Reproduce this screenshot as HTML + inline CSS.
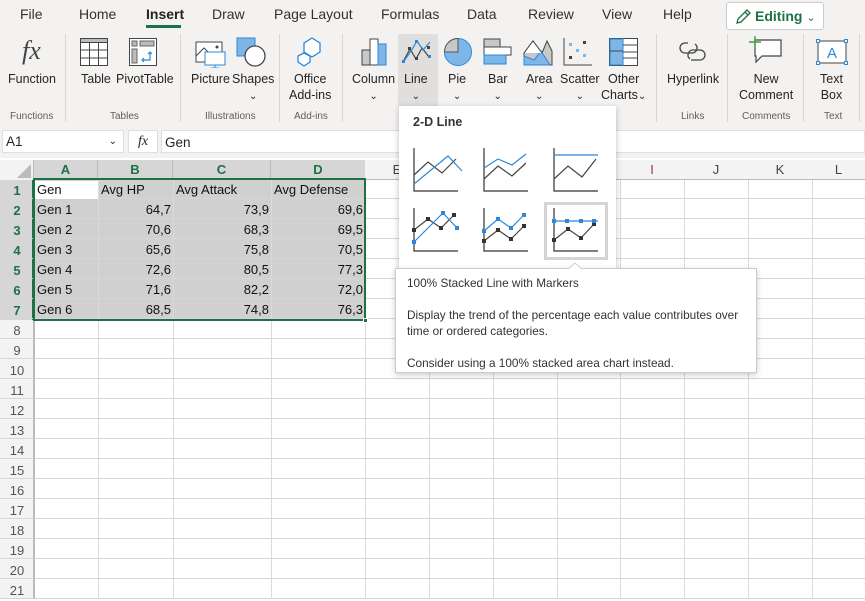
<!DOCTYPE html>
<html><head><meta charset="utf-8"><style>
*{box-sizing:border-box;margin:0;padding:0}
body{width:865px;height:599px;overflow:hidden;background:#fff;font-family:"Liberation Sans",sans-serif;color:#252423;position:relative;font-size:13px}
.a{position:absolute}
.tab{position:absolute;top:6px;font-size:14px;color:#323130}
.btn{position:absolute;font-size:12.5px;color:#252423;text-align:center;line-height:16px}
.gl{position:absolute;top:111px;font-size:10px;color:#605e5c}
.sep{position:absolute;top:34px;width:1px;height:88px;background:#d6d6d6}
.ch{position:absolute;top:160px;height:20px;font-size:13px;text-align:center;line-height:20px;color:#444}
.rh{position:absolute;left:0;width:34px;height:20px;text-align:center;font-size:13px;line-height:21px;color:#555}
.vl{position:absolute;top:180px;width:1px;height:419px;background:#dadada}
.c{position:absolute;height:19px;font-size:13px;line-height:20px;color:#111}
.r{text-align:right}
</style></head><body>
<div class="a" style="left:0;top:0;width:865px;height:126px;background:#f3f2f1"></div>
<div class="tab" style="left:20px">File</div>
<div class="tab" style="left:79px">Home</div>
<div class="tab" style="left:146px;font-weight:bold;color:#252423">Insert</div>
<div class="a" style="left:146px;top:25px;width:35px;height:3px;background:#1e7145"></div>
<div class="tab" style="left:212px">Draw</div>
<div class="tab" style="left:274px">Page Layout</div>
<div class="tab" style="left:381px">Formulas</div>
<div class="tab" style="left:467px">Data</div>
<div class="tab" style="left:528px">Review</div>
<div class="tab" style="left:602px">View</div>
<div class="tab" style="left:663px">Help</div>
<div class="a" style="left:726px;top:2px;width:98px;height:28px;border:1px solid #ccc;border-radius:3px;background:#fff;color:#1e7145;font-size:14px;font-weight:bold;line-height:27px;padding-left:28px">Editing <span style="font-weight:normal;font-size:11px">&#8964;</span></div>
<svg class="a" style="left:734px;top:8px" width="18" height="18"><path d="M3 15l1-4 9-9 3 3-9 9z M11 4l3 3" fill="none" stroke="#1e7145" stroke-width="1.3"/></svg>

<div class="a" style="left:22px;top:36px;font-family:'Liberation Serif',serif;font-style:italic;font-size:26px;color:#444">fx</div>
<div class="btn" style="left:8px;top:71px">Function</div>
<div class="gl" style="left:10px">Functions</div>
<div class="sep" style="left:65px"></div>
<svg class="a" style="left:80px;top:38px" width="28" height="28"><rect x="0.5" y="0.5" width="27" height="27" fill="#fff" stroke="#444"/><rect x="0.5" y="0.5" width="27" height="4" fill="#bbb" stroke="#444"/><path d="M9.5 5v23M18.5 5v23M1 12h27M1 20h27" stroke="#444"/></svg>
<div class="btn" style="left:81px;top:71px">Table</div>
<svg class="a" style="left:129px;top:38px" width="28" height="28"><rect x="0.5" y="0.5" width="27" height="27" fill="#fff" stroke="#444"/><rect x="3" y="3" width="5" height="5" fill="#bbb" stroke="#666"/><rect x="11" y="3" width="14" height="5" fill="#bbb" stroke="#666"/><rect x="3" y="11" width="5" height="14" fill="#bbb" stroke="#666"/><path d="M13 22h8v-8M19 16l2-2 2 2M15 20l-2 2 2 2" fill="none" stroke="#2b88d8" stroke-width="1.2"/></svg>
<div class="btn" style="left:116px;top:71px">PivotTable</div>
<div class="gl" style="left:110px">Tables</div>
<div class="sep" style="left:180px"></div>
<svg class="a" style="left:195px;top:38px" width="34" height="30"><rect x="1" y="4" width="26" height="20" fill="#fff" stroke="#444"/><path d="M1 18l8-8 8 8" fill="none" stroke="#444"/><circle cx="22" cy="9" r="1.5" fill="#444"/><rect x="10" y="14" width="20" height="13" fill="#fff" stroke="#2b88d8"/><path d="M20 27v3M16 30h8" stroke="#2b88d8"/></svg>
<div class="btn" style="left:191px;top:71px">Picture</div>
<svg class="a" style="left:236px;top:37px" width="30" height="30"><rect x="1" y="1" width="18" height="18" fill="#7fb6e8" stroke="#2b88d8"/><circle cx="19" cy="19" r="10" fill="#fff" stroke="#444" stroke-width="1.3"/></svg>
<div class="btn" style="left:232px;top:71px">Shapes<br><span style="font-size:10px">&#8964;</span></div>
<div class="gl" style="left:205px">Illustrations</div>
<div class="sep" style="left:279px"></div>
<svg class="a" style="left:296px;top:36px" width="32" height="32"><path d="M16 2l8 5v9l-8 5-8-5V7z M8 17l-6 3v6l6 4 6-4v-6z" fill="#fff" stroke="#2b88d8" stroke-width="1.3"/></svg>
<div class="btn" style="left:289px;top:71px">Office<br>Add-ins</div>
<div class="gl" style="left:294px">Add-ins</div>
<div class="sep" style="left:342px"></div>
<svg class="a" style="left:361px;top:38px" width="26" height="28"><rect x="1" y="12" width="8" height="15" fill="#c8c8c8" stroke="#444"/><rect x="9" y="1" width="8" height="26" fill="#fff" stroke="#444"/><rect x="17" y="6" width="8" height="21" fill="#7fb6e8" stroke="#2b88d8"/></svg>
<div class="btn" style="left:352px;top:71px">Column<br><span style="font-size:10px">&#8964;</span></div>
<div class="a" style="left:398px;top:34px;width:40px;height:74px;background:#e1dfdd"></div>
<svg class="a" style="left:402px;top:40px" width="32" height="24"><path d="M2 20l6-11 6 10 6-11 7 9" fill="none" stroke="#444" stroke-width="1.2"/><path d="M2 21l7-10 6-10 6 9 7-8" fill="none" stroke="#2b88d8" stroke-width="1.2"/><g fill="#444"><rect x="6" y="7" width="3" height="3"/><rect x="13" y="17" width="3" height="3"/><rect x="25" y="6" width="3" height="3"/></g><g fill="#2b88d8"><rect x="0" y="20" width="3" height="3"/><rect x="13" y="0" width="3" height="3"/><rect x="26" y="15" width="3" height="3"/></g></svg>
<div class="btn" style="left:404px;top:71px">Line<br><span style="font-size:10px">&#8964;</span></div>
<svg class="a" style="left:443px;top:37px" width="30" height="30"><circle cx="15" cy="15" r="13.5" fill="#7fb6e8" stroke="#2b88d8"/><path d="M15 15V1.5A13.5 13.5 0 0 0 1.5 15z" fill="#c8c8c8" stroke="#555"/></svg>
<div class="btn" style="left:448px;top:71px">Pie<br><span style="font-size:10px">&#8964;</span></div>
<svg class="a" style="left:483px;top:38px" width="30" height="28"><rect x="1" y="1" width="16" height="8" fill="#c8c8c8" stroke="#444"/><rect x="1" y="9" width="27" height="8" fill="#fff" stroke="#444"/><rect x="1" y="17" width="22" height="9" fill="#7fb6e8" stroke="#2b88d8"/></svg>
<div class="btn" style="left:488px;top:71px">Bar<br><span style="font-size:10px">&#8964;</span></div>
<svg class="a" style="left:523px;top:38px" width="30" height="28"><path d="M1 27V15L10 3l9 12 5-12 5 10v14z" fill="#c8c8c8" stroke="#444"/><path d="M1 27V18l10 4 7-9 9 14z" fill="#7fb6e8" stroke="#2b88d8"/><path d="M1 15L10 3l9 12" fill="#fff" stroke="#444"/></svg>
<div class="btn" style="left:526px;top:71px">Area<br><span style="font-size:10px">&#8964;</span></div>
<svg class="a" style="left:563px;top:38px" width="30" height="28"><path d="M1 0v27h28" fill="none" stroke="#444"/><g fill="#7fb6e8"><rect x="6" y="5" width="3" height="3"/><rect x="13" y="11" width="3" height="3"/><rect x="20" y="16" width="3" height="3"/></g><g fill="#444"><rect x="20" y="3" width="3" height="3"/><rect x="6" y="18" width="3" height="3"/></g></svg>
<div class="btn" style="left:560px;top:71px">Scatter<br><span style="font-size:10px">&#8964;</span></div>
<svg class="a" style="left:609px;top:38px" width="30" height="28"><rect x="0.5" y="0.5" width="28" height="27" fill="#fff" stroke="#444"/><rect x="1" y="1" width="13" height="26" fill="#7fb6e8" stroke="#2b88d8"/><path d="M1 13h13M14 7h14M14 14h14M14 20h14" stroke="#444"/></svg>
<div class="btn" style="left:601px;top:71px">Other<br>Charts<span style="font-size:10px">&#8964;</span></div>
<div class="sep" style="left:656px"></div>
<svg class="a" style="left:677px;top:40px" width="32" height="24"><path d="M11 3h-3a5 5 0 0 0 0 10h7a5 5 0 0 0 3-9 M14 20h9a5 5 0 0 0 0-10h-7a5 5 0 0 0-3 9" fill="none" stroke="#444" stroke-width="1.3"/></svg>
<div class="btn" style="left:667px;top:71px">Hyperlink</div>
<div class="gl" style="left:681px">Links</div>
<div class="sep" style="left:727px"></div>
<svg class="a" style="left:748px;top:36px" width="34" height="30"><path d="M7 4h26v16H14l-6 6v-6H7z" fill="#fff" stroke="#444" stroke-width="1.2"/><path d="M7 0v12M1 6h12" stroke="#3aa03a" stroke-width="1.4"/></svg>
<div class="btn" style="left:739px;top:71px">New<br>Comment</div>
<div class="gl" style="left:742px">Comments</div>
<div class="sep" style="left:803px"></div>
<svg class="a" style="left:816px;top:39px" width="32" height="26"><rect x="2" y="2" width="28" height="22" fill="#fff" stroke="#444"/><g fill="#fff" stroke="#2b88d8"><rect x="0.5" y="0.5" width="3" height="3"/><rect x="28.5" y="0.5" width="3" height="3"/><rect x="0.5" y="22.5" width="3" height="3"/><rect x="28.5" y="22.5" width="3" height="3"/></g><text x="16" y="19" text-anchor="middle" font-family="Liberation Sans" font-size="15" fill="#2b88d8">A</text></svg>
<div class="btn" style="left:820px;top:71px">Text<br>Box</div>
<div class="gl" style="left:824px">Text</div>
<div class="sep" style="left:859px"></div>

<div class="a" style="left:0;top:126px;width:865px;height:32px;background:#f3f2f1"></div>
<div class="a" style="left:2px;top:130px;width:122px;height:23px;background:#fff;border:1px solid #e1dfdd;font-size:13.5px;line-height:22px;padding-left:3px">A1<span style="position:absolute;right:6px;font-size:10px">&#8964;</span></div>
<div class="a" style="left:128px;top:130px;width:30px;height:23px;background:#fff;border:1px solid #e1dfdd;font-family:'Liberation Serif',serif;font-style:italic;font-size:14px;line-height:22px;text-align:center">fx</div>
<div class="a" style="left:161px;top:130px;width:704px;height:23px;background:#fff;border:1px solid #e1dfdd;font-size:13.5px;line-height:24px;padding-left:3px">Gen</div>

<div class="a" style="left:0;top:160px;width:865px;height:20px;background:#f3f3f3;border-bottom:1px solid #bbb"></div>
<div class="a" style="left:0;top:160px;width:34px;height:439px;background:#f3f3f3;border-right:1px solid #bbb"></div>
<svg class="a" style="left:16px;top:164px" width="16" height="14"><path d="M15 0v14H1z" fill="#bbb"/></svg>
<div class="a" style="left:34px;top:160px;width:331px;height:20px;background:#d6d6d6;border-bottom:2px solid #1e7145"></div>
<div class="ch" style="left:34px;width:64px;color:#1e7145;font-weight:bold;border-right:1px solid #bbb">A</div>
<div class="ch" style="left:98px;width:75px;color:#1e7145;font-weight:bold;border-right:1px solid #bbb">B</div>
<div class="ch" style="left:173px;width:98px;color:#1e7145;font-weight:bold;border-right:1px solid #bbb">C</div>
<div class="ch" style="left:271px;width:94px;color:#1e7145;font-weight:bold">D</div>
<div class="ch" style="left:365px;width:64px">E</div>
<div class="ch" style="left:620px;width:64px;color:#a33;">I</div>
<div class="ch" style="left:684px;width:64px">J</div>
<div class="ch" style="left:748px;width:64px">K</div>
<div class="ch" style="left:812px;width:53px">L</div>
<div class="a" style="left:34px;top:180px;width:331px;height:140px;background:#d0d0d0"></div>
<div class="a" style="left:0;top:180px;width:34px;height:140px;background:#d6d6d6;border-right:2px solid #1e7145"></div>
<div class="a" style="left:0;top:179px;width:865px;height:420px;background:repeating-linear-gradient(to bottom,transparent 0,transparent 19px,#d6d6d6 19px,#d6d6d6 20px)"></div>
<div class="vl" style="left:98px"></div><div class="vl" style="left:173px"></div><div class="vl" style="left:271px"></div><div class="vl" style="left:365px"></div><div class="vl" style="left:429px"></div><div class="vl" style="left:493px"></div><div class="vl" style="left:557px"></div><div class="vl" style="left:620px"></div><div class="vl" style="left:684px"></div><div class="vl" style="left:748px"></div><div class="vl" style="left:812px"></div>
<div class="a" style="left:34px;top:179px;width:1px;height:420px;background:#bbb"></div>
<div class="a" style="left:35px;top:181px;width:63px;height:18px;background:#fff"></div>
<div class="a" style="left:33px;top:178px;width:333px;height:143px;border:2px solid #1e7145"></div>
<div class="a" style="left:363px;top:318px;width:5px;height:5px;background:#1e7145;border:1px solid #fff"></div>

<div class="rh" style="top:180px;color:#1e7145;font-weight:bold">1</div>
<div class="rh" style="top:200px;color:#1e7145;font-weight:bold">2</div>
<div class="rh" style="top:220px;color:#1e7145;font-weight:bold">3</div>
<div class="rh" style="top:240px;color:#1e7145;font-weight:bold">4</div>
<div class="rh" style="top:260px;color:#1e7145;font-weight:bold">5</div>
<div class="rh" style="top:280px;color:#1e7145;font-weight:bold">6</div>
<div class="rh" style="top:300px;color:#1e7145;font-weight:bold">7</div>
<div class="rh" style="top:320px">8</div><div class="rh" style="top:340px">9</div><div class="rh" style="top:360px">10</div><div class="rh" style="top:380px">11</div><div class="rh" style="top:400px">12</div><div class="rh" style="top:420px">13</div><div class="rh" style="top:440px">14</div><div class="rh" style="top:460px">15</div><div class="rh" style="top:480px">16</div><div class="rh" style="top:500px">17</div><div class="rh" style="top:520px">18</div><div class="rh" style="top:540px">19</div><div class="rh" style="top:560px">20</div><div class="rh" style="top:580px">21</div>

<div class="c" style="left:37px;top:180px">Gen</div>
<div class="c" style="left:101px;top:180px">Avg HP</div>
<div class="c" style="left:176px;top:180px">Avg Attack</div>
<div class="c" style="left:274px;top:180px">Avg Defense</div>
<div class="c" style="left:37px;top:200px">Gen 1</div><div class="c r" style="left:98px;width:73px;top:200px">64,7</div><div class="c r" style="left:173px;width:96px;top:200px">73,9</div><div class="c r" style="left:271px;width:92px;top:200px">69,6</div>
<div class="c" style="left:37px;top:220px">Gen 2</div><div class="c r" style="left:98px;width:73px;top:220px">70,6</div><div class="c r" style="left:173px;width:96px;top:220px">68,3</div><div class="c r" style="left:271px;width:92px;top:220px">69,5</div>
<div class="c" style="left:37px;top:240px">Gen 3</div><div class="c r" style="left:98px;width:73px;top:240px">65,6</div><div class="c r" style="left:173px;width:96px;top:240px">75,8</div><div class="c r" style="left:271px;width:92px;top:240px">70,5</div>
<div class="c" style="left:37px;top:260px">Gen 4</div><div class="c r" style="left:98px;width:73px;top:260px">72,6</div><div class="c r" style="left:173px;width:96px;top:260px">80,5</div><div class="c r" style="left:271px;width:92px;top:260px">77,3</div>
<div class="c" style="left:37px;top:280px">Gen 5</div><div class="c r" style="left:98px;width:73px;top:280px">71,6</div><div class="c r" style="left:173px;width:96px;top:280px">82,2</div><div class="c r" style="left:271px;width:92px;top:280px">72,0</div>
<div class="c" style="left:37px;top:300px">Gen 6</div><div class="c r" style="left:98px;width:73px;top:300px">68,5</div><div class="c r" style="left:173px;width:96px;top:300px">74,8</div><div class="c r" style="left:271px;width:92px;top:300px">76,3</div>

<div class="a" style="left:399px;top:106px;width:217px;height:166px;background:#fff;box-shadow:0 2px 6px rgba(0,0,0,.25)"></div>
<div class="a" style="left:413px;top:115px;font-size:12.5px;font-weight:bold;color:#333">2-D Line</div>
<svg class="a" style="left:399px;top:106px" width="217" height="166">
<g fill="none" stroke-width="1.2">
<path d="M15 42v43h44" stroke="#333"/><path d="M15 69l14-13 14 11 14-14" stroke="#444"/><path d="M15 78l34-28 14 15" stroke="#2b88d8"/>
<path d="M85 42v43h44" stroke="#333"/><path d="M85 73l14-13 14 10 14-13" stroke="#444"/><path d="M85 62l14-9 14 6 14-11" stroke="#2b88d8"/>
<path d="M155 42v43h44" stroke="#333"/><path d="M155 73l14-13 14 11 14-18" stroke="#444"/><path d="M155 49h44" stroke="#2b88d8"/>
<path d="M15 102v43h44" stroke="#333"/><path d="M15 124l14-11 13 9 13-13" stroke="#444"/><path d="M15 136l29-29 14 15" stroke="#2b88d8"/>
<path d="M85 102v43h44" stroke="#333"/><path d="M85 135l14-11 13 9 13-13" stroke="#444"/><path d="M85 125l14-12 13 9 13-13" stroke="#2b88d8"/>
<path d="M155 102v43h44" stroke="#333"/><path d="M155 134l14-11 13 9 13-14" stroke="#444"/><path d="M155 115h44" stroke="#2b88d8"/>
</g>
<g fill="#333"><rect x="13" y="122" width="4" height="4"/><rect x="27" y="111" width="4" height="4"/><rect x="40" y="120" width="4" height="4"/><rect x="53" y="107" width="4" height="4"/>
<rect x="83" y="133" width="4" height="4"/><rect x="97" y="122" width="4" height="4"/><rect x="110" y="131" width="4" height="4"/><rect x="123" y="118" width="4" height="4"/>
<rect x="153" y="132" width="4" height="4"/><rect x="167" y="121" width="4" height="4"/><rect x="180" y="130" width="4" height="4"/><rect x="193" y="116" width="4" height="4"/></g>
<g fill="#2b88d8"><rect x="13" y="134" width="4" height="4"/><rect x="42" y="105" width="4" height="4"/><rect x="56" y="120" width="4" height="4"/>
<rect x="83" y="123" width="4" height="4"/><rect x="97" y="111" width="4" height="4"/><rect x="110" y="120" width="4" height="4"/><rect x="123" y="107" width="4" height="4"/>
<rect x="153" y="113" width="4" height="4"/><rect x="166" y="113" width="4" height="4"/><rect x="180" y="113" width="4" height="4"/><rect x="193" y="113" width="4" height="4"/></g>
<rect x="146.5" y="97.5" width="61" height="55" fill="none" stroke="#d4d4d4" stroke-width="3"/>
</svg>
<div class="a" style="left:395px;top:268px;width:362px;height:105px;background:#fff;border:1px solid #ccc;box-shadow:0 2px 6px rgba(0,0,0,.2);font-size:11.8px;color:#333;line-height:16px;padding:6px 11px">
100% Stacked Line with Markers<br><br>Display the trend of the percentage each value contributes over time or ordered categories.<br><br>Consider using a 100% stacked area chart instead.</div>
<svg class="a" style="left:568px;top:262px" width="14" height="8"><path d="M0 7l7-6 7 6" fill="#fff" stroke="#ccc"/></svg>
</body></html>
